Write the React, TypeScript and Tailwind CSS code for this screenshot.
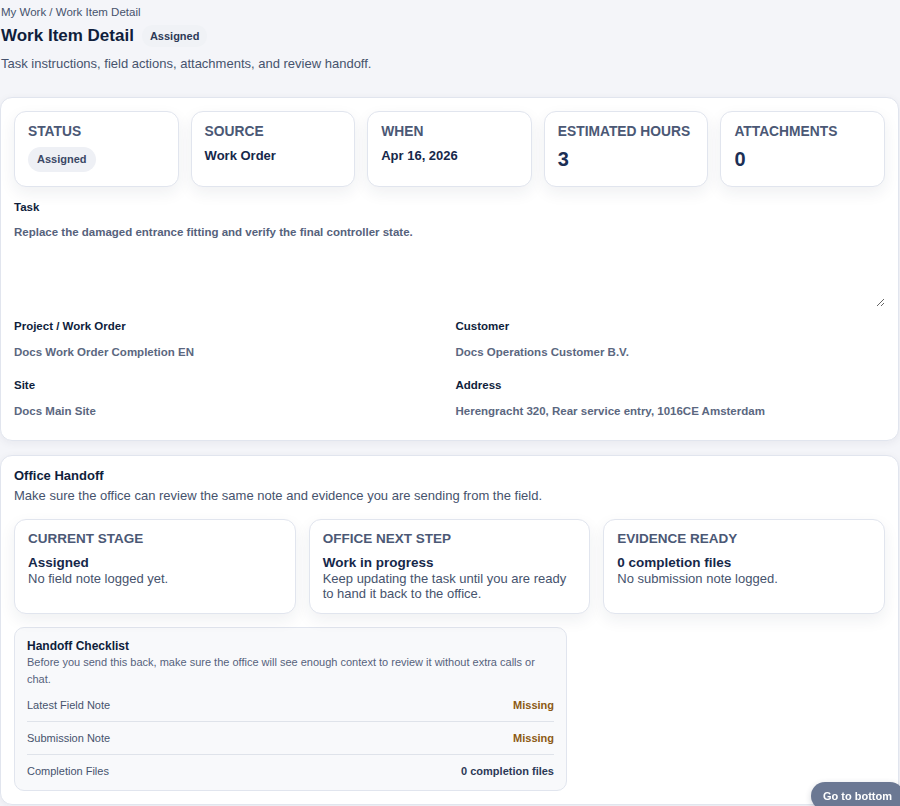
const stats = [
  { label: "Status", badge: "Assigned" },
  { label: "Source", value: "Work Order" },
  { label: "When", value: "Apr 16, 2026" },
  { label: "Estimated Hours", big: "3" },
  { label: "Attachments", big: "0" },
];

const details = [
  { label: "Project / Work Order", value: "Docs Work Order Completion EN" },
  { label: "Customer", value: "Docs Operations Customer B.V." },
  { label: "Site", value: "Docs Main Site" },
  { label: "Address", value: "Herengracht 320, Rear service entry, 1016CE Amsterdam" },
];

const handoff = [
  {
    label: "Current Stage",
    title: "Assigned",
    text: "No field note logged yet.",
  },
  {
    label: "Office Next Step",
    title: "Work in progress",
    text: "Keep updating the task until you are ready to hand it back to the office.",
  },
  {
    label: "Evidence Ready",
    title: "0 completion files",
    text: "No submission note logged.",
  },
];

const checklist = [
  { label: "Latest Field Note", value: "Missing", warn: true },
  { label: "Submission Note", value: "Missing", warn: true },
  { label: "Completion Files", value: "0 completion files", warn: false },
];

function StatCard({ label, value, badge, big }: { label: string; value?: string; badge?: string; big?: string }) {
  return (
    <div className="h-[76px] rounded-[12px] border border-[#e1e5ee] bg-white px-[13px] pt-[11px] shadow-[0_6px_16px_rgba(30,41,70,0.07)]">
      <p className="text-[13.8px] font-bold uppercase leading-[18px] text-[#4b5875]">{label}</p>
      {badge && (
        <span className="mt-[6px] inline-flex h-[25px] items-center rounded-full bg-[#eef0f5] px-[9px] text-[11px] font-bold text-[#3b4866]">
          {badge}
        </span>
      )}
      {value && <p className="mt-[7px] text-[13px] font-bold leading-[16px] text-[#16284a]">{value}</p>}
      {big && <p className="mt-[6px] text-[20px] font-bold leading-[24px] text-[#1c2f55]">{big}</p>}
    </div>
  );
}

export default function App() {
  return (
    <div className="min-h-[806px] bg-[#f4f5f9] font-['Liberation_Sans',Arial,sans-serif] text-[#16284a]">
      <div className="pb-3 pl-[1px] pt-[5px]">
        <p className="text-[11.5px] leading-[14px] text-[#46536d]">My Work / Work Item Detail</p>
        <div className="mt-[6px] flex items-center gap-[8px]">
          <h1 className="text-[17px] font-bold leading-[22px] text-[#0f1e3c]">Work Item Detail</h1>
          <span className="inline-flex h-[22px] items-center rounded-full bg-[#f0f2f6] px-[8px] text-[11px] font-bold text-[#2d3a57]">
            Assigned
          </span>
        </div>
        <p className="mt-[9px] text-[13px] leading-[16px] text-[#46536d]">
          Task instructions, field actions, attachments, and review handoff.
        </p>
      </div>

      <div className="mt-[13px] mr-[1px] rounded-[12px] border border-[#e1e5ee] bg-white px-[13px] pb-[22px] pt-[13px] shadow-[0_2px_8px_rgba(30,41,70,0.06)]">
        <div className="grid grid-cols-5 gap-[12px]">
          {stats.map((s) => (
            <StatCard key={s.label} {...s} />
          ))}
        </div>

        <p className="mt-[13px] text-[11.5px] font-bold leading-[14px] text-[#0f1e3c]">Task</p>
        <textarea
          readOnly
          defaultValue="Replace the damaged entrance fitting and verify the final controller state."
          className="mt-[11px] block h-[82px] w-full resize-y bg-transparent p-0 text-[11.5px] font-bold leading-[14px] text-[#56627c] outline-none"
        />

        <div className="mt-[12px] grid grid-cols-2 gap-x-[12px] gap-y-[19px]">
          {details.map((d) => (
            <div key={d.label}>
              <p className="text-[11.5px] font-bold leading-[14px] text-[#0f1e3c]">{d.label}</p>
              <p className="mt-[12px] text-[11.5px] font-bold leading-[14px] text-[#5b6780]">{d.value}</p>
            </div>
          ))}
        </div>
      </div>

      <div className="mt-[14px] mr-[1px] rounded-[12px] border border-[#e1e5ee] bg-white px-[13px] pb-[13px] pt-[12px] shadow-[0_2px_8px_rgba(30,41,70,0.06)]">
        <h2 className="text-[13px] font-bold leading-[16px] text-[#0f1e3c]">Office Handoff</h2>
        <p className="mt-[4px] text-[13px] leading-[16px] text-[#46536d]">
          Make sure the office can review the same note and evidence you are sending from the field.
        </p>

        <div className="mt-[15px] grid grid-cols-3 gap-[13px]">
          {handoff.map((h) => (
            <div
              key={h.label}
              className="h-[95px] rounded-[12px] border border-[#e1e5ee] bg-white px-[13px] pt-[11px] shadow-[0_6px_16px_rgba(30,41,70,0.07)]"
            >
              <p className="text-[13.5px] font-bold uppercase leading-[16px] text-[#4b5875]">{h.label}</p>
              <p className="mt-[8px] text-[13.5px] font-bold leading-[16px] text-[#16284a]">{h.title}</p>
              <p className="text-[13px] leading-[15px] text-[#46536d]">{h.text}</p>
            </div>
          ))}
        </div>

        <div className="mt-[13px] w-[553px] rounded-[10px] border border-[#e1e5ee] bg-[#f8f9fb] px-[12px] pb-[3px] pt-[10px]">
          <h3 className="text-[12px] font-bold leading-[16px] text-[#0f1e3c]">Handoff Checklist</h3>
          <p className="text-[11px] leading-[17px] text-[#56627c]">
            Before you send this back, make sure the office will see enough context to review it without extra calls or
            chat.
          </p>
          <div className="mt-[1px]">
            {checklist.map((c, i) => (
              <div
                key={c.label}
                className={`flex items-center justify-between py-[9px] text-[11px] leading-[14px] ${
                  i < checklist.length - 1 ? "border-b border-[#dfe3ea]" : ""
                }`}
              >
                <span className="text-[#46536d]">{c.label}</span>
                <span className={`font-bold ${c.warn ? "text-[#8c5a14]" : "text-[#2d3a57]"}`}>{c.value}</span>
              </div>
            ))}
          </div>
        </div>
      </div>

      <button className="fixed bottom-[-4px] right-[-4px] rounded-full bg-[#6b7893] px-[12px] pb-[7px] pt-[8px] text-[11px] font-bold leading-[13px] text-white shadow-[0_2px_6px_rgba(30,41,70,0.2)]">
        Go to bottom
      </button>
    </div>
  );
}
